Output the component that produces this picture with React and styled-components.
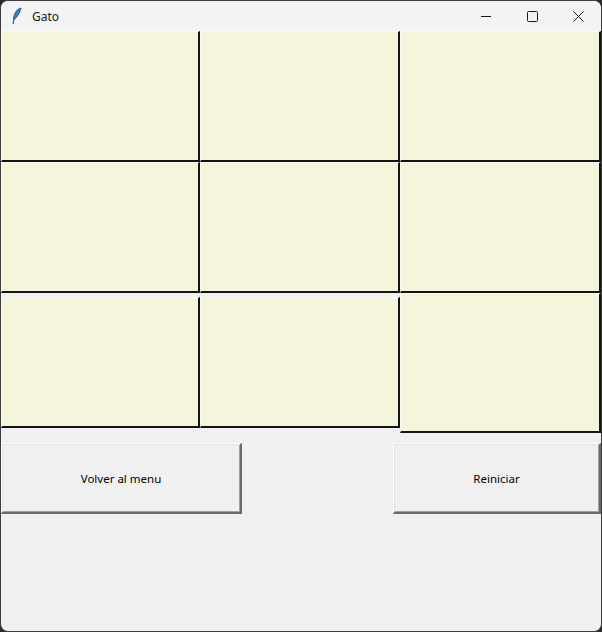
import React from 'react';
import styled, { createGlobalStyle } from 'styled-components';

const GlobalStyle = createGlobalStyle`
html, body {
  margin: 0;
  padding: 0;
  background: #2b2b2b;
}
`

const Window = styled.div`
width: 602px;
height: 632px;
box-sizing: border-box;
border: 1px solid #3c3c3c;
border-radius: 8px;
overflow: hidden;
background: #f0f0f0;
display: flex;
flex-direction: column;
font-family: 'Segoe UI', 'Noto Sans', 'Liberation Sans', sans-serif;
`

const TitleBar = styled.div`
height: 30px;
flex-shrink: 0;
background: #f3f3f3;
display: flex;
align-items: center;
`

const AppIcon = styled.div`
width: 30px;
display: flex;
justify-content: center;
align-items: center;
padding-left: 1px;
`

const Title = styled.span`
font-size: 12px;
color: #1a1a1a;
flex-grow: 1;
`

const Controls = styled.div`
display: flex;
height: 100%;
`

const ControlButton = styled.div`
width: 46px;
height: 100%;
display: flex;
align-items: center;
justify-content: center;
`

const Board = styled.div`
display: grid;
grid-template-columns: 199px 200px 201px;
grid-template-rows: 131px 131px 140px;
align-items: start;
`

const Cell = styled.div`
box-sizing: border-box;
height: ${props => props.tall ? '140px' : '131px'};
margin-top: ${props => props.shifted ? '4px' : '0'};
background: #f5f5dc;
border-top: 1px solid #fafaf0;
border-left: 1px solid #fafaf0;
border-right: 2px solid #141414;
border-bottom: 2px solid #141414;
`

const Actions = styled.div`
display: flex;
justify-content: space-between;
margin-top: 10px;
`

const Button = styled.div`
box-sizing: border-box;
width: ${props => props.width}px;
height: 71px;
background: #f0f0f0;
display: flex;
align-items: center;
justify-content: center;
font-size: 11.5px;
color: #000;
border-top: 1px solid #ffffff;
border-left: 1px solid #ffffff;
border-right: 2px solid #6a6a6a;
border-bottom: 2px solid #6a6a6a;
box-shadow: inset 1px 1px 0 #e3e3e3, inset -1px -1px 0 #a0a0a0;
`

function Feather() {
    return (
        <svg width="10" height="18" viewBox="0 0 10 18">
            <path d="M9 1 C5 2 2 6 1.5 12 L2.5 12.5 C5 10 8 6 9 1 Z" fill="#3b7fd4" stroke="#1b3f7a" strokeWidth="0.8" />
            <path d="M2 12 L1 17" stroke="#1b3f7a" strokeWidth="1" />
        </svg>
    );
}

export default function App() {
    const cells = [0, 1, 2, 3, 4, 5, 6, 7, 8];
    return (
        <>
            <GlobalStyle />
            <Window>
                <TitleBar>
                    <AppIcon><Feather /></AppIcon>
                    <Title>Gato</Title>
                    <Controls>
                        <ControlButton>
                            <svg width="10" height="10" viewBox="0 0 10 10"><path d="M0 5.5 H10" stroke="#1a1a1a" strokeWidth="1" /></svg>
                        </ControlButton>
                        <ControlButton>
                            <svg width="11" height="11" viewBox="0 0 11 11"><rect x="0.5" y="0.5" width="10" height="10" rx="1" fill="none" stroke="#1a1a1a" strokeWidth="1" /></svg>
                        </ControlButton>
                        <ControlButton>
                            <svg width="11" height="11" viewBox="0 0 11 11"><path d="M0.5 0.5 L10.5 10.5 M10.5 0.5 L0.5 10.5" stroke="#1a1a1a" strokeWidth="1" /></svg>
                        </ControlButton>
                    </Controls>
                </TitleBar>
                <Board>
                    {cells.map(i => <Cell key={i} tall={i === 8} shifted={i === 6 || i === 7} />)}
                </Board>
                <Actions>
                    <Button width={241}>Volver al menu</Button>
                    <Button width={208}>Reiniciar</Button>
                </Actions>
            </Window>
        </>
    );
}
